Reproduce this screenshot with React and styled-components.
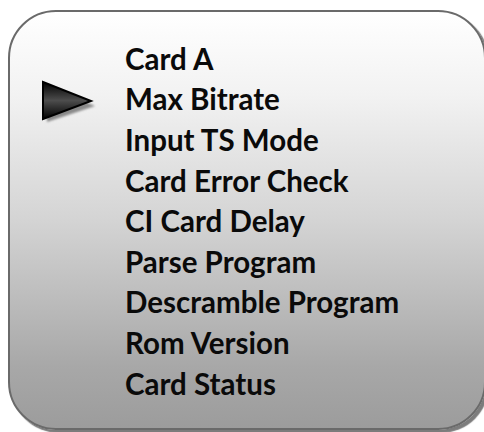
import React from "react";
import styled, { createGlobalStyle } from "styled-components";

const GlobalStyle = createGlobalStyle`
  html, body {
    margin: 0;
    padding: 0;
    background: #ffffff;
    overflow: hidden;
  }
  body {
    font-family: "Lato", "Open Sans", sans-serif;
  }
`;

const items = [
  "Card A",
  "Max Bitrate",
  "Input TS Mode",
  "Card Error Check",
  "CI Card Delay",
  "Parse Program",
  "Descramble Program",
  "Rom Version",
  "Card Status",
];

export default function App() {
  const selected = 1;

  return (
    <>
      <GlobalStyle />
      <Page>
        <Panel>
          <Menu>
            {items.map((label, i) => (
              <Row key={label}>
                <Marker>{i === selected && <Pointer />}</Marker>
                <Label>{label}</Label>
              </Row>
            ))}
          </Menu>
        </Panel>
      </Page>
    </>
  );
}

function Pointer() {
  return (
    <svg width="56" height="44" viewBox="0 0 56 44">
      <defs>
        <linearGradient id="ptr-fill" x1="0" y1="0" x2="0" y2="1">
          <stop offset="0" stopColor="#000000" />
          <stop offset="0.5" stopColor="#4d4d4d" />
          <stop offset="1" stopColor="#000000" />
        </linearGradient>
        <filter id="ptr-soft" x="-20%" y="-20%" width="140%" height="140%">
          <feGaussianBlur stdDeviation="0.8" />
        </filter>
      </defs>
      <polygon
        points="6,6 54,26 6,42"
        fill="#8a8a8a"
        filter="url(#ptr-soft)"
      />
      <polygon
        points="2,2 50,21 2,39"
        fill="url(#ptr-fill)"
        stroke="#000000"
        strokeWidth="2"
        strokeLinejoin="miter"
      />
    </svg>
  );
}

const Page = styled.div`
  padding: 10px 0 0 8px;
  width: 484px;
  height: 432px;
  box-sizing: border-box;
`;

const Panel = styled.div`
  width: 478px;
  height: 420px;
  box-sizing: border-box;
  border: 2px solid #6a6a6a;
  border-radius: 48px;
  background: linear-gradient(to bottom, #ffffff 0%, #f2f2f2 20%, #d4d4d4 50%, #a8a8a8 85%, #9c9c9c 100%);
  box-shadow: 3px 3px 1px #7c7c7c;
  padding-top: 26px;
`;

const Menu = styled.div`
  display: flex;
  flex-direction: column;
`;

const Row = styled.div`
  display: grid;
  grid-template-columns: 115px 1fr;
  grid-template-rows: 40.6px;
  align-items: center;
`;

const Marker = styled.div`
  display: flex;
  align-items: center;
  padding-left: 31px;
  height: 100%;
  svg {
    display: block;
    transform: translateY(3px);
  }
`;

const Label = styled.span`
  font-family: "Lato", "Open Sans", sans-serif;
  font-weight: 700;
  font-size: 29.5px;
  color: #0a0a0a;
  white-space: nowrap;
`;
